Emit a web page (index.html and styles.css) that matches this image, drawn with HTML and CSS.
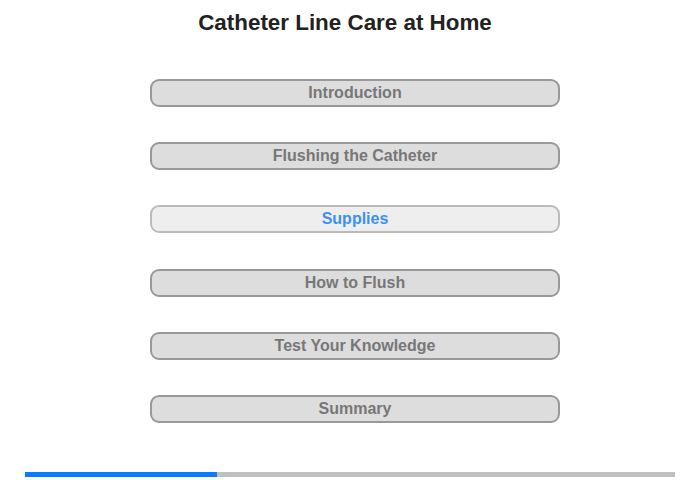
FILE: index.html
```html
<!DOCTYPE html>
<html>
<head>
<meta charset="utf-8">
<link rel="stylesheet" href="styles.css">
</head>
<body>
<div class="page">
  <h1 class="title">Catheter Line Care at Home</h1>
  <nav class="menu">
    <div class="item">Introduction</div>
    <div class="item">Flushing the Catheter</div>
    <div class="item active">Supplies</div>
    <div class="item">How to Flush</div>
    <div class="item">Test Your Knowledge</div>
    <div class="item">Summary</div>
  </nav>
  <div class="progress"><div class="fill" style="width:29.5%"></div></div>
</div>
</body>
</html>
```
FILE: styles.css
```css
html, body { margin: 0; padding: 0; background: #fff; }
body { font-family: "Liberation Sans", Arial, sans-serif; }
.page { width: 700px; height: 480px; display: flex; flex-direction: column; align-items: center; }
.title { margin: 10px 10px 0 0; font-size: 22.4px; line-height: 26px; font-weight: bold; color: #222; }
.menu { margin: 43px 0 0 10px; display: flex; flex-direction: column; gap: 35.2px; }
.item {
  width: 406px; height: 24px; box-sizing: content-box;
  border: 2px solid #999; border-radius: 9px; background: #ddd;
  color: #777; font-weight: bold; font-size: 16px; line-height: 24px; text-align: center;
}
.item.active { background: #eee; border-color: #bbb; color: #3c91f2; }
.progress { margin-top: 49px; width: 650px; height: 5px; background: #c0c0c0; }
.fill { height: 100%; background: #0a7cff; }
```
